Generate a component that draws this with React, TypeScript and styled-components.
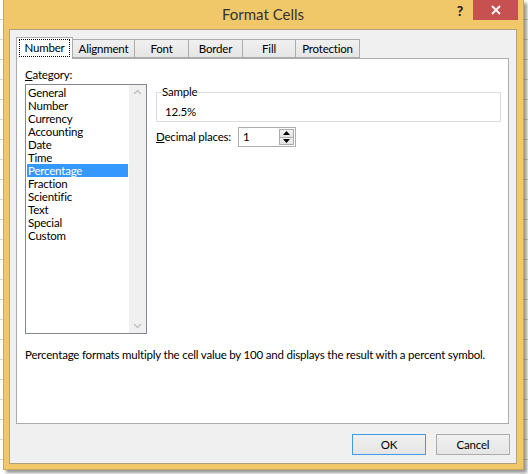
import React from "react";
import styled, { createGlobalStyle } from "styled-components";

const GlobalStyle = createGlobalStyle`
  html, body {
    margin: 0;
    padding: 0;
  }
  body {
    width: 528px;
    height: 474px;
    overflow: hidden;
    background: #ffffff
      repeating-linear-gradient(
        to bottom,
        transparent 0,
        transparent 19px,
        #d4d4d4 19px,
        #d4d4d4 20px
      );
    font-family: Lato, "Noto Sans", sans-serif;
    font-size: 11.5px;
    letter-spacing: -0.2px;
    color: #000;
  }
`;

const Screen = styled.div`
  width: 528px;
  height: 474px;
  box-sizing: border-box;
  padding-left: 3px;
  display: flex;
  align-items: flex-start;
`;

const Window = styled.div`
  width: 521px;
  height: 470px;
  box-sizing: border-box;
  display: flex;
  flex-direction: column;
  padding: 0 6px 5px 5px;
  background: #f0c86a;
  border: 1px solid #c8a75e;
  border-top: none;
  box-shadow: 3px 3px 3px rgba(0, 0, 0, 0.4);
`;

const TitleBar = styled.div`
  height: 29px;
  display: grid;
  grid-template-columns: 1fr auto 1fr;
  align-items: start;
`;

const Title = styled.div`
  grid-column: 2;
  font-size: 15px;
  letter-spacing: 0;
  line-height: 29px;
  color: #333333;
`;

const Controls = styled.div`
  grid-column: 3;
  justify-self: end;
  display: flex;
  gap: 3px;
  margin-right: -1px;
`;

const HelpButton = styled.div`
  width: 20px;
  height: 20px;
  display: flex;
  align-items: center;
  justify-content: center;
  font-weight: 900;
  font-size: 14px;
  letter-spacing: 0;
  color: #222;
`;

const CloseButton = styled.div`
  width: 45px;
  height: 20px;
  display: flex;
  align-items: center;
  justify-content: center;
  background: #c75050;
`;

const DialogBody = styled.div`
  flex: 1;
  display: flex;
  flex-direction: column;
  padding: 7px 7px 0 6px;
  background: #f0f0f0;
  border: 1px solid #b0a37c;
`;

const TabStrip = styled.div`
  display: flex;
  align-items: flex-end;
  height: 21px;
  position: relative;
  z-index: 1;
`;

const Tab = styled.div<{ $width: number; $active?: boolean }>`
  width: ${(p) => p.$width}px;
  height: ${(p) => (p.$active ? 22 : 19)}px;
  margin-bottom: ${(p) => (p.$active ? -1 : 0)}px;
  box-sizing: border-box;
  display: flex;
  align-items: center;
  justify-content: center;
  border: 1px solid #acacac;
  border-bottom: ${(p) => (p.$active ? "none" : "1px solid #acacac")};
  background: ${(p) =>
    p.$active ? "#ffffff" : "linear-gradient(#f0f0f0, #e5e5e5)"};
  padding-bottom: ${(p) => (p.$active ? 2 : 0)}px;

  & + & {
    margin-left: -1px;
  }
`;

const FocusLabel = styled.span`
  outline: 1px dotted #000;
  outline-offset: 1px;
  padding: 0 3px;
  line-height: 14px;
`;

const Panel = styled.div`
  height: 366px;
  box-sizing: border-box;
  border: 1px solid #acacac;
  background: #ffffff;
  padding: 8px 7px 0 8px;
  display: grid;
  grid-template-columns: 122px 1fr;
  grid-template-rows: auto auto;
  column-gap: 9px;
  align-content: start;
`;

const LeftColumn = styled.div`
  display: flex;
  flex-direction: column;
`;

const FieldLabel = styled.div`
  line-height: 16px;
  margin-bottom: 1px;
`;

const ListBox = styled.div`
  height: 250px;
  box-sizing: border-box;
  border: 1px solid #828790;
  display: flex;
`;

const ListItems = styled.div`
  flex: 1;
  padding: 1px 1px 0 1px;
`;

const ListItem = styled.div<{ $selected?: boolean }>`
  line-height: 13px;
  height: 13px;
  padding-left: 1px;
  white-space: nowrap;
  background: ${(p) => (p.$selected ? "#3399ff" : "transparent")};
  color: ${(p) => (p.$selected ? "#ffffff" : "#000000")};
`;

const ScrollBar = styled.div`
  width: 17px;
  background: #f0f0f0;
  display: flex;
  flex-direction: column;
  justify-content: space-between;
  align-items: center;
  padding: 4px 0;
`;

const RightColumn = styled.div`
  display: flex;
  flex-direction: column;
  margin-top: 18px;
`;

const GroupBox = styled.fieldset`
  margin: 0;
  min-width: 0;
  padding: 6px 0 2px 4px;
  border: 1px solid #dcdcdc;
`;

const GroupLegend = styled.legend`
  padding: 0 1px;
  line-height: 14px;
`;

const SampleValue = styled.div`
  line-height: 14px;
  padding-left: 4px;
`;

const DecimalRow = styled.div`
  display: flex;
  align-items: center;
  margin-top: 5px;
`;

const DecimalLabel = styled.div`
  width: 82px;
  line-height: 14px;
  white-space: nowrap;
`;

const SpinBox = styled.div`
  width: 58px;
  height: 20px;
  box-sizing: border-box;
  border: 1px solid #abadb3;
  display: flex;
  padding: 1px 1px 1px 0;
`;

const SpinValue = styled.div`
  flex: 1;
  line-height: 16px;
  padding-left: 4px;
`;

const Spinner = styled.div`
  width: 15px;
  display: flex;
  flex-direction: column;
`;

const SpinButton = styled.div`
  flex: 1;
  box-sizing: border-box;
  border: 1px solid #acacac;
  background: linear-gradient(#f2f2f2, #e3e3e3);
  display: flex;
  align-items: center;
  justify-content: center;

  & + & {
    border-top: none;
  }
`;

const Description = styled.div`
  grid-column: 1 / span 2;
  margin-top: 14px;
  line-height: 14px;
  white-space: nowrap;
`;

const ButtonRow = styled.div`
  display: flex;
  justify-content: flex-end;
  gap: 10px;
  margin-top: 10px;
  margin-right: -1px;
`;

const PushButton = styled.div<{ $default?: boolean }>`
  width: 74px;
  height: 21px;
  box-sizing: border-box;
  display: flex;
  align-items: center;
  justify-content: center;
  border: 1px solid ${(p) => (p.$default ? "#3d9be9" : "#acacac")};
  background: linear-gradient(#f0f0f0, #e5e5e5);
`;

const Chevron = ({ up }: { up?: boolean }) => (
  <svg width="9" height="6" viewBox="0 0 9 6">
    <path
      d={up ? "M1 5 L4.5 1.5 L8 5" : "M1 1 L4.5 4.5 L8 1"}
      fill="none"
      stroke="#c2c2c2"
      strokeWidth="1.5"
    />
  </svg>
);

const SpinArrow = ({ up }: { up?: boolean }) => (
  <svg width="7" height="4" viewBox="0 0 7 4">
    <path d={up ? "M0 4 L3.5 0 L7 4 Z" : "M0 0 L3.5 4 L7 0 Z"} fill="#000" />
  </svg>
);

const CloseIcon = () => (
  <svg width="10" height="10" viewBox="0 0 10 10">
    <path d="M1 1 L9 9 M9 1 L1 9" stroke="#ffffff" strokeWidth="1.8" />
  </svg>
);

const tabs = [
  { label: "Number", width: 57 },
  { label: "Alignment", width: 63 },
  { label: "Font", width: 55 },
  { label: "Border", width: 55 },
  { label: "Fill", width: 54 },
  { label: "Protection", width: 65 },
];

const categories = [
  "General",
  "Number",
  "Currency",
  "Accounting",
  "Date",
  "Time",
  "Percentage",
  "Fraction",
  "Scientific",
  "Text",
  "Special",
  "Custom",
];

const App: React.FC = () => {
  return (
    <>
      <GlobalStyle />
      <Screen>
        <Window>
          <TitleBar>
            <Title>Format Cells</Title>
            <Controls>
              <HelpButton>?</HelpButton>
              <CloseButton>
                <CloseIcon />
              </CloseButton>
            </Controls>
          </TitleBar>
          <DialogBody>
            <TabStrip>
              {tabs.map((tab, i) => (
                <Tab key={tab.label} $width={tab.width} $active={i === 0}>
                  {i === 0 ? <FocusLabel>{tab.label}</FocusLabel> : tab.label}
                </Tab>
              ))}
            </TabStrip>
            <Panel>
              <LeftColumn>
                <FieldLabel>
                  <u>C</u>ategory:
                </FieldLabel>
                <ListBox>
                  <ListItems>
                    {categories.map((name) => (
                      <ListItem key={name} $selected={name === "Percentage"}>
                        {name}
                      </ListItem>
                    ))}
                  </ListItems>
                  <ScrollBar>
                    <Chevron up />
                    <Chevron />
                  </ScrollBar>
                </ListBox>
              </LeftColumn>
              <RightColumn>
                <GroupBox>
                  <GroupLegend>Sample</GroupLegend>
                  <SampleValue>12.5%</SampleValue>
                </GroupBox>
                <DecimalRow>
                  <DecimalLabel>
                    <u>D</u>ecimal places:
                  </DecimalLabel>
                  <SpinBox>
                    <SpinValue>1</SpinValue>
                    <Spinner>
                      <SpinButton>
                        <SpinArrow up />
                      </SpinButton>
                      <SpinButton>
                        <SpinArrow />
                      </SpinButton>
                    </Spinner>
                  </SpinBox>
                </DecimalRow>
              </RightColumn>
              <Description>
                Percentage formats multiply the cell value by 100 and displays
                the result with a percent symbol.
              </Description>
            </Panel>
            <ButtonRow>
              <PushButton $default>OK</PushButton>
              <PushButton>Cancel</PushButton>
            </ButtonRow>
          </DialogBody>
        </Window>
      </Screen>
    </>
  );
};

export default App;
